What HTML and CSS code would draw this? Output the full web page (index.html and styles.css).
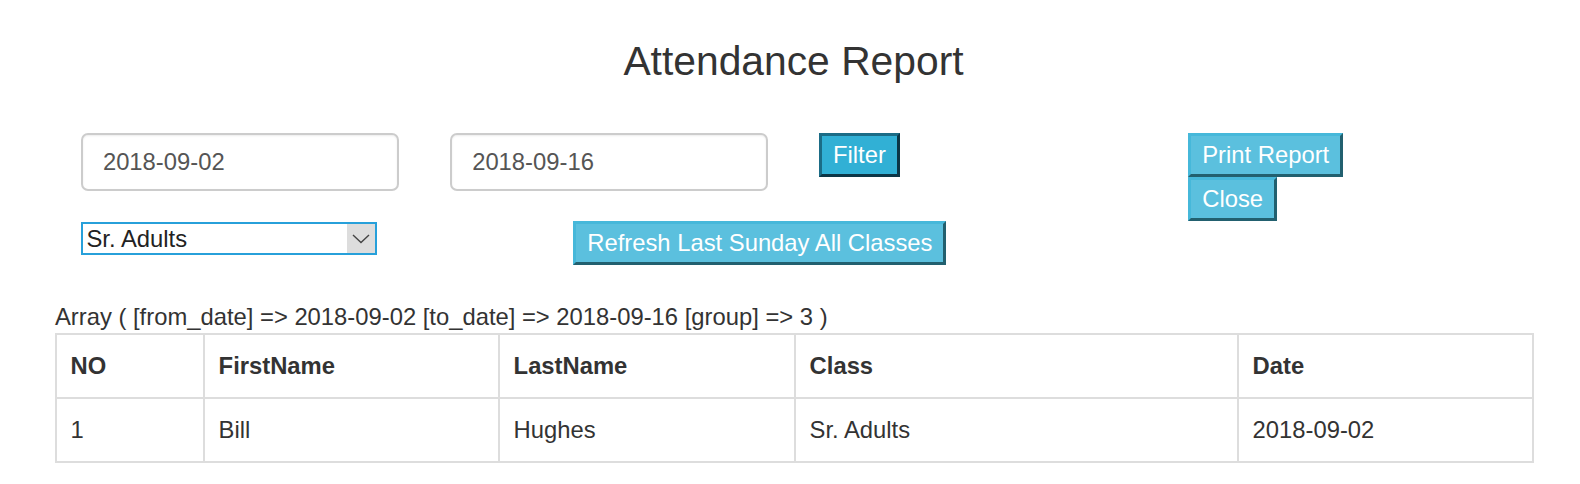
FILE: index.html
```html
<!DOCTYPE html>
<html lang="en">
<head>
<meta charset="utf-8">
<title>Attendance Report</title>
<link rel="stylesheet" href="styles.css">
</head>
<body>
<div class="page">
  <h3 class="title">Attendance Report</h3>
  <form class="controls">
    <div class="row row-top">
      <div class="col"><input class="field" type="text" value="2018-09-02"></div>
      <div class="col"><input class="field" type="text" value="2018-09-16"></div>
      <div class="col"><button class="btn btn-active" type="button">Filter</button></div>
      <div class="col col-stack">
        <button class="btn" type="button">Print Report</button>
        <button class="btn" type="button">Close</button>
      </div>
    </div>
    <div class="row row-bottom">
      <div class="col">
        <div class="select-wrap">
          <select class="select"><option>Sr. Adults</option></select>
          <span class="select-arrow"><svg width="18" height="10" viewBox="0 0 18 10"><polyline points="1,1 9,8.5 17,1" fill="none" stroke="#444" stroke-width="1.4"/></svg></span>
        </div>
      </div>
      <div class="refresh-cell"><button class="btn" type="button">Refresh Last Sunday All Classes</button></div>
    </div>
  </form>
  <div class="dump">Array ( [from_date] =&gt; 2018-09-02 [to_date] =&gt; 2018-09-16 [group] =&gt; 3 )</div>
  <table class="report">
    <colgroup>
      <col class="c-no"><col class="c-first"><col class="c-last"><col class="c-class"><col class="c-date">
    </colgroup>
    <thead>
      <tr><th>NO</th><th>FirstName</th><th>LastName</th><th>Class</th><th>Date</th></tr>
    </thead>
    <tbody>
      <tr><td>1</td><td>Bill</td><td>Hughes</td><td>Sr. Adults</td><td>2018-09-02</td></tr>
    </tbody>
  </table>
</div>
</body>
</html>
```

FILE: styles.css
```css
html, body {
  margin: 0;
  padding: 0;
  background: #fff;
}
body {
  font-family: "Liberation Sans", Arial, Helvetica, sans-serif;
  font-size: 23.8px;
  line-height: 34px;
  color: #333;
}
.page {
  padding: 0 48px 0 55px;
}
.title {
  margin: 39px 0 0;
  font-size: 40.8px;
  line-height: 45px;
  font-weight: 500;
  text-align: center;
  color: #333;
}
.controls {
  margin: 49px 0 0;
}
.row {
  display: flex;
  align-items: flex-start;
}
.col {
  flex: 0 0 25%;
  box-sizing: border-box;
  padding: 0 25.5px;
}
.col-stack {
  display: flex;
  flex-direction: column;
  align-items: flex-start;
}
.field {
  display: block;
  box-sizing: border-box;
  width: 100%;
  height: 58px;
  padding: 0 20.4px;
  margin: 0;
  border: 2px solid #ccc;
  border-radius: 7px;
  box-shadow: inset 0 1px 2px rgba(0,0,0,0.075);
  font: inherit;
  color: #555;
  background: #fff;
  outline: none;
}
.btn {
  display: inline-block;
  margin: 0;
  padding: 2px 11px;
  font: inherit;
  line-height: 34px;
  color: #fff;
  background: #5bc0de;
  border: 3px solid;
  border-color: #46b8da #22606f #22606f #46b8da;
  cursor: pointer;
}
.btn-active {
  background: #31b0d5;
  border-color: #1b6c86 #0c3646 #0c3646 #1b6c86;
}
.select-wrap {
  display: flex;
  box-sizing: border-box;
  width: 296px;
  height: 33px;
  margin-top: 1px;
  border: 2px solid #27a0da;
  background: #fff;
}
.select {
  flex: 1;
  min-width: 0;
  -webkit-appearance: none;
  appearance: none;
  border: 0;
  margin: 0;
  padding: 0 0 0 4px;
  font: inherit;
  line-height: 29px;
  color: #222;
  background: #fff;
  outline: none;
}
.select-arrow {
  flex: 0 0 28px;
  display: flex;
  align-items: center;
  justify-content: center;
  background: #ddd;
}
.refresh-cell {
  padding-left: 149px;
}
.dump {
  margin-top: 36px;
  line-height: 32px;
  color: #333;
}
.report {
  width: 1477px;
  table-layout: fixed;
  border-collapse: collapse;
  border: 2px solid #ddd;
}
.c-no { width: 148px; }
.c-first { width: 295px; }
.c-last { width: 296px; }
.c-class { width: 443px; }
.c-date { width: 295px; }
.report th,
.report td {
  border: 2px solid #ddd;
  padding: 14px 13.6px;
  line-height: 34px;
  text-align: left;
  vertical-align: top;
  color: #333;
}
.report th {
  font-weight: bold;
}
```
